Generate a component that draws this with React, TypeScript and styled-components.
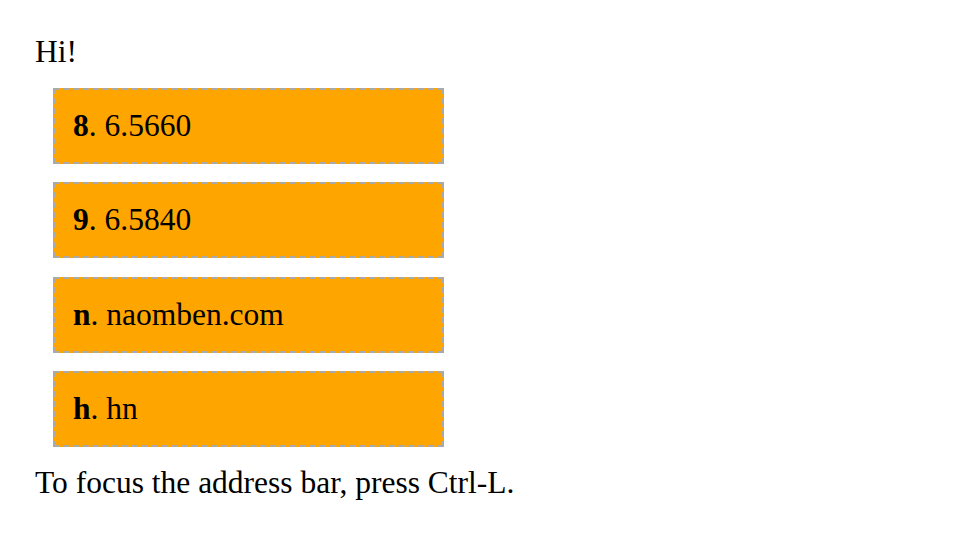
import React from "react";
import styled, { createGlobalStyle } from "styled-components";

const Global = createGlobalStyle`
  html, body { margin: 0; padding: 0; background: #fff; }
  body { font-family: "Liberation Serif", "Times New Roman", serif; font-size: 31.5px; color: #000; }
`;

const Page = styled.div`
  padding: 34px 0 0 35px;
  display: flex;
  flex-direction: column;
  align-items: flex-start;
  gap: 18px;
`;

const Line = styled.div`
  line-height: 36px;
`;

const List = styled.div`
  display: flex;
  flex-direction: column;
  gap: 18.33px;
  margin-left: 18px;
`;

const Item = styled.div`
  box-sizing: border-box;
  width: 391px;
  height: 76px;
  padding: 18px 18px;
  background: orange;
  border: 2px dashed darkgray;
  line-height: 36px;
`;

const Key = styled.b`
  font-weight: bold;
`;

const items = [
  { k: "8", v: "6.5660" },
  { k: "9", v: "6.5840" },
  { k: "n", v: "naomben.com" },
  { k: "h", v: "hn" },
];

export default function App() {
  return (
    <>
      <Global />
      <Page>
        <Line>Hi!</Line>
        <List>
          {items.map((it) => (
            <Item key={it.k}>
              <Key>{it.k}</Key>. {it.v}
            </Item>
          ))}
        </List>
        <Line>To focus the address bar, press Ctrl-L.</Line>
      </Page>
    </>
  );
}
